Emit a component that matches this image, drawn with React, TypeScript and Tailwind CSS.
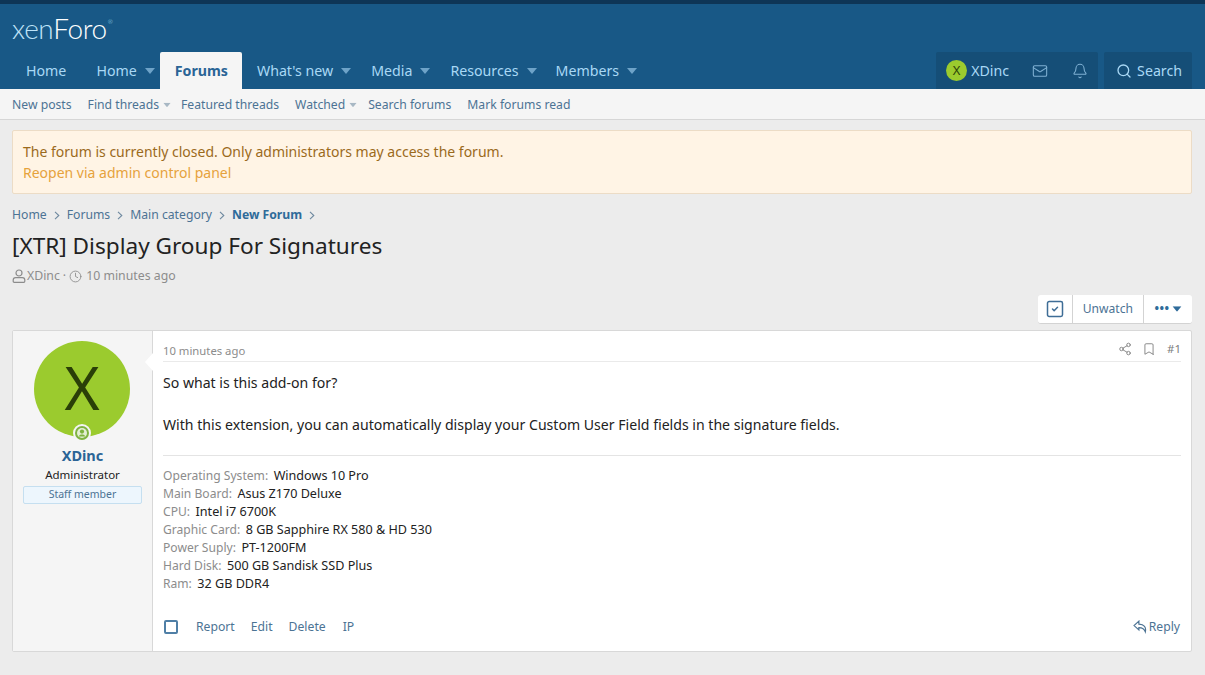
import { Bell, Bookmark, Clock, Mail, Search, Share2, SquareCheck } from 'lucide-react';

const font = { fontFamily: '"Noto Sans", sans-serif' };

function Caret({ className }: { className: string }) {
    return (
        <svg width="10" height="6" viewBox="0 0 10 6" className={className}>
            <path d="M0 0h10L5 6z" fill="currentColor" />
        </svg>
    );
}

function Chevron() {
    return (
        <svg width="6" height="9" viewBox="0 0 6 9" className="text-[#6f8aa0]">
            <path d="M1 .8 4.8 4.5 1 8.2" fill="none" stroke="currentColor" strokeWidth="1.1" />
        </svg>
    );
}

function UserOutline() {
    return (
        <svg width="14" height="14" viewBox="0 0 14 14" fill="none" stroke="currentColor" strokeWidth="1.2">
            <circle cx="7" cy="4" r="3" />
            <path d="M3.6 8.6h6.8c1.4 0 2.4 1.1 2.4 2.5v1.2c0 .6-.4 1-1 1H2.2c-.6 0-1-.4-1-1v-1.2c0-1.4 1-2.5 2.4-2.5z" />
        </svg>
    );
}

const specs = [
    ['Operating System:', 'Windows 10 Pro'],
    ['Main Board:', 'Asus Z170 Deluxe'],
    ['CPU:', 'Intel i7 6700K'],
    ['Graphic Card:', '8 GB Sapphire RX 580 & HD 530'],
    ['Power Suply:', 'PT-1200FM'],
    ['Hard Disk:', '500 GB Sandisk SSD Plus'],
    ['Ram:', '32 GB DDR4'],
];

export default function App() {
    return (
        <div className="h-[675px] w-[1205px] overflow-hidden bg-[#ececec] text-[#222]" style={font}>
            <header className="border-t-[4px] border-[#0e3556] bg-[#185886]">
                <div className="flex h-[48px] items-center pl-[12px]">
                    <span className="flex items-start text-[28px] leading-none tracking-[-0.4px] font-light" style={{ fontFamily: 'Lato, sans-serif' }}>
                        <span className="text-[#bfe3f8]">xen</span>
                        <span className="text-white">Foro</span>
                        <span className="mt-[5px] ml-[1px] text-[6px] leading-none text-[#bfe3f8]">®</span>
                    </span>
                </div>
                <div className="flex h-[37px] items-stretch justify-between pr-[13px] text-[14.2px] text-[#a9d8f5]">
                    <nav className="flex items-stretch pl-[12px]">
                        <a className="flex items-center pl-[14px] pr-[15px]">Home</a>
                        <a className="flex items-center gap-[8px] pl-[15px] pr-[5px]">Home <Caret className="text-[#6ea3c8]" /></a>
                        <a className="flex items-center rounded-t-[2px] bg-[#f5f5f5] pl-[15px] pr-[14px] font-bold text-[#2a6496]">Forums</a>
                        <a className="flex items-center gap-[8px] pl-[15px] pr-[5px]">What's new <Caret className="text-[#6ea3c8]" /></a>
                        <a className="flex items-center gap-[8px] pl-[15px] pr-[5px]">Media <Caret className="text-[#6ea3c8]" /></a>
                        <a className="flex items-center gap-[8px] pl-[15px] pr-[5px]">Resources <Caret className="text-[#6ea3c8]" /></a>
                        <a className="flex items-center gap-[8px] pl-[14px] pr-[5px]">Members <Caret className="text-[#6ea3c8]" /></a>
                    </nav>
                    <div className="flex items-stretch gap-[6px]">
                        <div className="flex items-center rounded-t-[2px] bg-[#154e77]">
                            <span className="ml-[10px] flex h-[21px] w-[21px] items-center justify-center rounded-full bg-[#9bcb2e] text-[13px] text-[#2c4208]">X</span>
                            <span className="ml-[4px]">XDinc</span>
                            <Mail size={16} strokeWidth={1.6} className="ml-[23px] text-[#7fb0d3]" />
                            <Bell size={16} strokeWidth={1.6} className="ml-[24px] mr-[10px] text-[#7fb0d3]" />
                        </div>
                        <div className="flex items-center gap-[5px] rounded-t-[2px] bg-[#154e77] pl-[12px] pr-[10px]">
                            <Search size={16} strokeWidth={2} />
                            <span>Search</span>
                        </div>
                    </div>
                </div>
            </header>

            <div className="flex h-[31px] items-center border-b border-[#d6d6d6] bg-[#f5f5f5] pt-[2px] pl-[12px] text-[12.2px] text-[#4c7394]">
                <a>New posts</a>
                <a className="ml-[16px]">Find threads</a>
                <Caret className="ml-[3px] scale-75 text-[#a8b8c4]" />
                <a className="ml-[9px]">Featured threads</a>
                <a className="ml-[16px]">Watched</a>
                <Caret className="ml-[3px] scale-75 text-[#a8b8c4]" />
                <a className="ml-[10px]">Search forums</a>
                <a className="ml-[16px]">Mark forums read</a>
            </div>

            <main className="pl-[12px] pr-[13px]">
                <div className="mt-[10px] h-[64px] rounded-[2px] border border-[#ecdcc6] bg-[#fff4e5] px-[10px] pt-[10px] text-[14px] leading-[21px] text-[#9b6a1c]">
                    <p>The forum is currently closed. Only administrators may access the forum.</p>
                    <a className="text-[#e6a23c]">Reopen via admin control panel</a>
                </div>

                <div className="mt-[13px] flex h-[17px] items-center gap-[7px] text-[12.2px] text-[#4c7394]">
                    <a>Home</a>
                    <Chevron />
                    <a>Forums</a>
                    <Chevron />
                    <a>Main category</a>
                    <Chevron />
                    <a className="font-bold text-[#2f6b9a]">New Forum</a>
                    <Chevron />
                </div>
                <h1 className="mt-[6px] text-[22.6px] leading-[32px] font-normal text-[#222]">[XTR] Display Group For Signatures</h1>
                <div className="mt-[5px] flex h-[18px] items-center text-[12.3px] text-[#8c8c8c]">
                    <UserOutline />
                    <span className="ml-[1px]">XDinc</span>
                    <span className="mx-[3px]">·</span>
                    <Clock size={13} strokeWidth={1.6} />
                    <span className="ml-[4px]">10 minutes ago</span>
                </div>

                <div className="mt-[10px] flex justify-end">
                    <div className="flex h-[29px] items-stretch rounded-[3px] border-b border-[#d3d3d3] bg-white text-[12.1px] text-[#4c7394]">
                        <span className="flex w-[35px] items-center justify-center border-r border-[#d3d3d3]">
                            <SquareCheck size={20} strokeWidth={1.8} className="text-[#3e6d96]" />
                        </span>
                        <span className="flex items-center border-r border-[#d3d3d3] px-[10px]">Unwatch</span>
                        <span className="flex w-[48px] items-center justify-center gap-[2px] text-[#2f6b9a]">
                            <span className="tracking-[0.5px] font-bold leading-none">•••</span>
                            <Caret className="scale-90" />
                        </span>
                    </div>
                </div>

                <article className="mt-[6px] flex h-[322px] rounded-[2px] border border-[#d8d8d8] bg-white">
                    <aside className="relative flex w-[140px] shrink-0 flex-col items-center border-r border-[#d8d8d8] bg-[#f5f5f5] px-[10px] pt-[10px]">
                        <div className="relative mr-[1px] flex h-[96px] w-[96px] items-center justify-center rounded-full bg-[#9bcb2e] pb-[4px] text-[60px] leading-none text-[#2a3f08]">
                            X
                            <span className="absolute -bottom-[5px] left-[39px] flex h-[18px] w-[18px] items-center justify-center rounded-full bg-[#f5f5f5]">
                                <svg width="14" height="14" viewBox="0 0 14 14">
                                    <circle cx="7" cy="7" r="7" fill="#7fb341" />
                                    <circle cx="7" cy="7" r="5" fill="#e4efd4" />
                                    <circle cx="7" cy="5.6" r="2.1" fill="#7fb341" />
                                    <path d="M3.6 10.6c.5-1.6 1.8-2.2 3.4-2.2s2.9.6 3.4 2.2z" fill="#7fb341" />
                                </svg>
                            </span>
                        </div>
                        <a className="mt-[8px] text-[14.5px] leading-[20px] font-bold text-[#2a6496]">XDinc</a>
                        <span className="mt-[2px] text-[11.5px] leading-[15px]">Administrator</span>
                        <span className="mt-[4px] flex h-[18px] w-[119px] items-center justify-center rounded-[2px] border border-[#c5dff0] bg-[#edf6fd] text-[10.5px] text-[#4c7394]">Staff member</span>
                        <svg width="8" height="18" viewBox="0 0 8 18" className="absolute top-[22px] -right-[1px]">
                            <path d="M8 0 0 9l8 9z" fill="#fff" />
                        </svg>
                    </aside>

                    <div className="flex min-w-0 flex-1 flex-col px-[10px]">
                        <div className="flex h-[31px] items-center justify-between border-b border-[#eaeaea] text-[11.3px] text-[#8c8c8c]">
                            <span className="mt-[10px]">10 minutes ago</span>
                            <span className="mt-[6px] flex items-center text-[#7d7d7d]">
                                <Share2 size={14} strokeWidth={1.5} />
                                <Bookmark size={14} strokeWidth={1.5} className="ml-[10px]" />
                                <span className="ml-[11px] text-[11.5px]">#1</span>
                            </span>
                        </div>
                        <div className="pt-[10px] text-[14.1px] leading-[21px]">
                            <p>So what is this add-on for?</p>
                            <p className="mt-[21px]">With this extension, you can automatically display your Custom User Field fields in the signature fields.</p>
                        </div>
                        <div className="mt-[20px] border-t border-[#e4e4e4] pt-[11px]">
                            {specs.map(([label, value]) => (
                                <div key={label} className="flex h-[18px] items-baseline leading-[18px]">
                                    <span className="text-[12.1px] text-[#8c8c8c]">{label}</span>
                                    <span className="ml-[5.5px] text-[12.6px]">{value}</span>
                                </div>
                            ))}
                        </div>
                        <div className="mt-auto mb-[15px] flex items-center text-[12.2px] text-[#4c7394]">
                            <span className="ml-[1px] h-[14px] w-[14px] rounded-[2px] border-[2px] border-[#4f7fa6]" />
                            <a className="ml-[18px]">Report</a>
                            <a className="ml-[16px]">Edit</a>
                            <a className="ml-[16px]">Delete</a>
                            <a className="ml-[17px]">IP</a>
                            <a className="ml-auto mr-[1px] flex items-center gap-[1px]">
                                <svg width="15" height="14" viewBox="0 0 14 13" fill="none" stroke="currentColor" strokeWidth="1.1">
                                    <path d="M5.5 1 1 5.2l4.5 4V7c3 0 5 .6 6 4 1-4-1-7-6-7.2z" />
                                </svg>
                                Reply
                            </a>
                        </div>
                    </div>
                </article>
            </main>
        </div>
    );
}
